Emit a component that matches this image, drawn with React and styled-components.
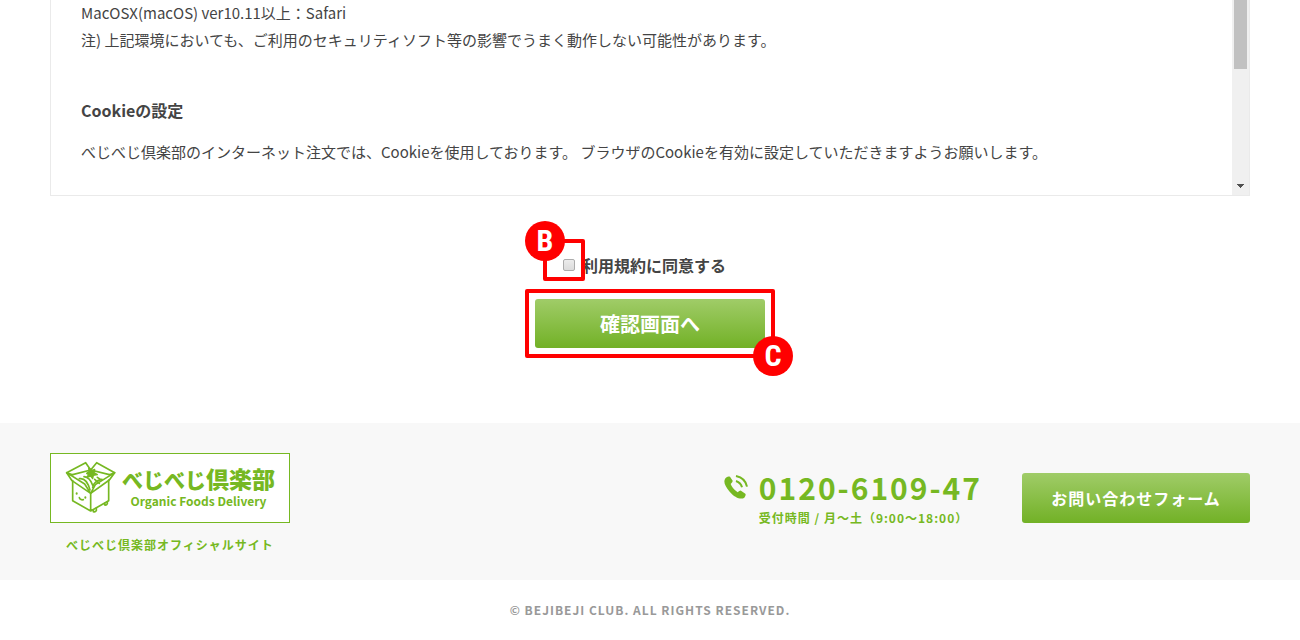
import React from "react";
import styled, { createGlobalStyle } from "styled-components";

const GREEN = "#76b822";

const GlobalStyle = createGlobalStyle`
  * {
    box-sizing: border-box;
  }

  body {
    margin: 0;
    background: #fff;
    color: #444;
    font-family: "Noto Sans CJK JP", "Noto Sans", sans-serif;
    font-size: 15px;
    line-height: 27px;
  }

  p, h2 {
    margin: 0;
  }
`;

const Container = styled.div`
  max-width: 1300px;
  margin: 0 auto;
  padding: 0 50px;
`;

const TermsPanel = styled.section`
  display: flex;
  border: 1px solid #eaeaea;
  border-top: 0;
`;

const TermsBody = styled.div`
  flex: 1;
  margin-top: -1px;
  padding: 0 30px 30px;
`;

const TermsHeading = styled.h2`
  margin: 43px 0 14px;
  font-size: 16px;
  line-height: 28px;
`;

const ScrollTrack = styled.div`
  display: flex;
  flex-direction: column;
  justify-content: space-between;
  align-items: center;
  width: 17px;
  padding-bottom: 7px;
  background: #f0f0f0;
`;

const ScrollThumb = styled.div`
  width: 13px;
  height: 69px;
  background: #c1c1c1;
`;

const ScrollArrow = styled.svg`
  display: block;
  width: 7px;
  height: 4px;
  fill: #505050;
`;

const AgreeForm = styled.form`
  display: flex;
  flex-direction: column;
  align-items: center;
  padding: 55px 0 75px;
`;

const AgreeRow = styled.div`
  display: flex;
  align-items: center;
  gap: 7px;
  margin-bottom: 20px;
  padding-right: 11px;
`;

const AgreeLabel = styled.label`
  font-size: 16px;
  font-weight: bold;
  line-height: 28px;
`;

const Checkbox = styled.input`
  appearance: none;
  display: block;
  width: 12px;
  height: 12px;
  margin: 0;
  border: 1px solid #acacac;
  border-radius: 2px;
  background: linear-gradient(#ececec, #dcdcdc);
`;

const Marked = styled.div`
  position: relative;
`;

const MarkFrame = styled.div`
  position: absolute;
  inset: ${props => props.$inset};
  border: 4px solid #f00;
  border-radius: 2px;
  pointer-events: none;
`;

const MarkBadge = styled.span`
  position: absolute;
  ${props => (props.$corner === "start" ? "top: -22px; left: -22px;" : "right: -22px; bottom: -22px;")}
  width: 40px;
  height: 40px;
  border-radius: 50%;
  background: #f00;
  color: #fff;
  font-family: "Liberation Sans Narrow", "Roboto Condensed", "Liberation Sans", sans-serif;
  font-size: 30px;
  font-weight: bold;
  line-height: 40px;
  text-align: center;
`;

const GreenButton = styled.button`
  display: block;
  width: ${props => props.$width};
  height: ${props => props.$height};
  padding: 0;
  border: 0;
  border-radius: 3px;
  background: linear-gradient(#a0cc68, #72b126);
  color: #fff;
  font-family: inherit;
  font-size: ${props => props.$size};
  font-weight: bold;
  line-height: ${props => props.$height};
  letter-spacing: ${props => props.$spacing || "normal"};
  text-align: center;
  text-decoration: none;
`;

const Footer = styled.footer`
  padding: 30px 0 24px;
  background: #f8f8f8;
  color: ${GREEN};
`;

const FooterInner = styled(Container)`
  display: flex;
  justify-content: space-between;
  align-items: flex-start;
`;

const Official = styled.a`
  display: block;
  width: 240px;
  color: inherit;
  font-size: 12px;
  font-weight: bold;
  line-height: 22px;
  letter-spacing: 1px;
  text-align: center;
  text-decoration: none;
`;

const LogoBox = styled.span`
  display: flex;
  align-items: flex-start;
  gap: 4px;
  height: 70px;
  margin-bottom: 11px;
  padding: 4px 0 0 11px;
  border: 1px solid ${GREEN};
  background: #fff;
  letter-spacing: normal;
`;

const LogoText = styled.span`
  display: block;
  padding-top: 8px;
`;

const LogoName = styled.span`
  display: block;
  font-size: 23px;
  font-weight: 900;
  line-height: 24px;
  white-space: nowrap;
`;

const LogoKana = styled.span`
  font-size: 21px;
`;

const LogoSub = styled.span`
  display: block;
  line-height: 20px;
`;

const Contact = styled.div`
  display: flex;
  align-items: flex-start;
  gap: 40px;
  padding-top: 20px;
`;

const Tel = styled.div`
  display: flex;
  align-items: flex-start;
  gap: 11px;
`;

const PhoneMark = styled.svg`
  display: block;
  width: 24px;
  height: 24px;
  margin-top: 2px;
`;

const TelNumber = styled.a`
  display: block;
  margin-bottom: 4px;
  color: inherit;
  font-size: 30px;
  font-weight: bold;
  line-height: 28px;
  letter-spacing: 2px;
  text-decoration: none;
`;

const TelHours = styled.p`
  font-size: 12px;
  font-weight: bold;
  line-height: 26px;
  letter-spacing: 1px;
`;

const Copyright = styled.p`
  padding: 19px 0;
  color: #999;
  font-size: 12px;
  font-weight: bold;
  line-height: 22px;
  letter-spacing: 1px;
  text-align: center;
`;

const BoxIcon = () => (
  <svg width="56" height="58" viewBox="0 0 168 174" fill="none" stroke={GREEN} strokeWidth="5" strokeLinejoin="round" strokeLinecap="round">
    <path d="M32 50L14 44L71 14L86 36L104 14L158 44L142 50" />
    <path d="M32 50L86 36L142 50" />
    <path d="M14 44L30 68L86 106L68 78L14 44Z" />
    <path d="M158 44L142 66L86 106L100 80L158 44Z" />
    <path d="M32 68V128L86 159L140 128V66M86 106V159" />
    <path d="M52 62Q74 58 84 96M66 56Q84 58 92 82M92 88Q96 68 120 64M98 64L112 76M106 58L118 66" />
    <path d="M74 46L82 40L80 32L90 38L98 34L96 44L106 50L94 52L92 62L86 54L74 58L80 50Z" fill={GREEN} strokeWidth="4" />
    <path d="M94 156V161Q100 163 103 158V150M128 136V141Q134 142 136 137V131" />
    <path d="M44 106V107M70 118V119" strokeWidth="6" />
    <path d="M52 119Q54 127 64 125" />
  </svg>
);

const PhoneIcon = () => (
  <PhoneMark viewBox="0 0 72 72">
    <path
      fill={GREEN}
      d="M3 12C6 5 13 3 18 5L26 17Q27 21 20 27Q25 41 41 52Q47 46 51 47L64 56Q67 60 61 68C51 75 32 68 17 50C3 34-2 21 3 12Z"
    />
    <path fill="none" stroke={GREEN} strokeWidth="6" d="M36 18Q51 23 54 37M36 3Q64 9 69 35" />
  </PhoneMark>
);

class App extends React.Component {
  handleSubmit(e) {
    e.preventDefault();
  }

  render() {
    return (
      <>
        <GlobalStyle />
        <Container>
          <TermsPanel>
            <TermsBody>
              <p>MacOSX(macOS) ver10.11以上：Safari</p>
              <p>注) 上記環境においても、ご利用のセキュリティソフト等の影響でうまく動作しない可能性があります。</p>
              <TermsHeading>Cookieの設定</TermsHeading>
              <p>べじべじ倶楽部のインターネット注文では、Cookieを使用しております。 ブラウザのCookieを有効に設定していただきますようお願いします。</p>
            </TermsBody>
            <ScrollTrack>
              <ScrollThumb />
              <ScrollArrow viewBox="0 0 7 4" shapeRendering="crispEdges">
                <path d="M0 0H7V1H6V2H5V3H4V4H3V3H2V2H1V1H0Z" />
              </ScrollArrow>
            </ScrollTrack>
          </TermsPanel>

          <AgreeForm onSubmit={this.handleSubmit.bind(this)}>
            <AgreeRow>
              <Marked>
                <Checkbox type="checkbox" id="agree" />
                <MarkFrame $inset="-20px -10px -10px -20px">
                  <MarkBadge $corner="start">B</MarkBadge>
                </MarkFrame>
              </Marked>
              <AgreeLabel htmlFor="agree">利用規約に同意する</AgreeLabel>
            </AgreeRow>
            <Marked>
              <GreenButton type="submit" $width="230px" $height="49px" $size="20px">確認画面へ</GreenButton>
              <MarkFrame $inset="-10px">
                <MarkBadge $corner="end">C</MarkBadge>
              </MarkFrame>
            </Marked>
          </AgreeForm>
        </Container>

        <Footer>
          <FooterInner>
            <Official href="#official">
              <LogoBox>
                <BoxIcon />
                <LogoText>
                  <LogoName><LogoKana>べじべじ</LogoKana>倶楽部</LogoName>
                  <LogoSub>Organic Foods Delivery</LogoSub>
                </LogoText>
              </LogoBox>
              べじべじ倶楽部オフィシャルサイト
            </Official>
            <Contact>
              <Tel>
                <PhoneIcon />
                <div>
                  <TelNumber href="tel:0120-6109-47">0120-6109-47</TelNumber>
                  <TelHours>受付時間 / 月〜土（9:00〜18:00）</TelHours>
                </div>
              </Tel>
              <GreenButton as="a" href="#contact" $width="228px" $height="50px" $size="16px" $spacing="1px">お問い合わせフォーム</GreenButton>
            </Contact>
          </FooterInner>
        </Footer>
        <Copyright>© BEJIBEJI CLUB. ALL RIGHTS RESERVED.</Copyright>
      </>
    );
  }
}

export default App;
